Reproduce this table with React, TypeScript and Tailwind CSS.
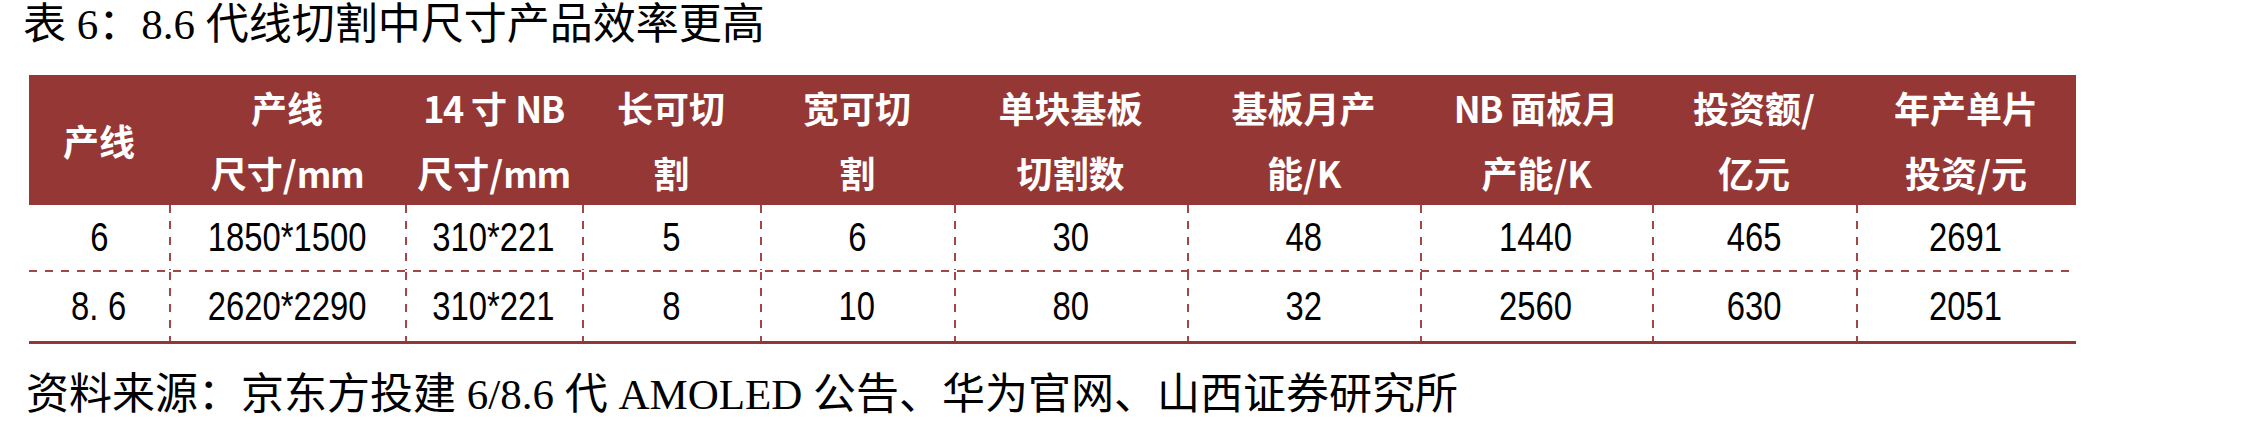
const headers: string[][] = [
  ['产线'],
  ['产线', '尺寸/mm'],
  ['14 寸 NB', '尺寸/mm'],
  ['长可切', '割'],
  ['宽可切', '割'],
  ['单块基板', '切割数'],
  ['基板月产', '能/K'],
  ['NB 面板月', '产能/K'],
  ['投资额/', '亿元'],
  ['年产单片', '投资/元'],
];

const rows: string[][] = [
  ['6', '1850*1500', '310*221', '5', '6', '30', '48', '1440', '465', '2691'],
  ['8.6', '2620*2290', '310*221', '8', '10', '80', '32', '2560', '630', '2051'],
];

const grid =
  'grid grid-cols-[140px_236px_177px_178px_194px_233px_233px_232px_204px_220px]';

const vDash =
  'bg-[repeating-linear-gradient(to_bottom,#a34644_0_8px,transparent_8px_16px)] bg-no-repeat bg-[length:2px_100%] bg-left';

function Cell({ value, first }: { value: string; first: boolean }) {
  // "8.6" is set in a monospaced face in the source, so the dot sits wide
  const content =
    value === '8.6' ? (
      <>
        8<span className="mr-[12px]">.</span>6
      </>
    ) : (
      value
    );
  return (
    <div className={`flex items-center justify-center ${first ? '' : vDash}`}>
      <span className="inline-block scale-x-[0.8] whitespace-nowrap">{content}</span>
    </div>
  );
}

function HeaderLine({ text }: { text: string }) {
  // latin runs in the header are a narrow face; squeeze them a little
  const parts = text.split(/([A-Za-z0-9]+)/).filter(Boolean);
  return (
    <span className="whitespace-nowrap">
      {parts.map((p, i) =>
        /^[A-Za-z0-9]+$/.test(p) ? (
          <span key={i} className="tracking-[-1.5px]">
            {p}
          </span>
        ) : (
          <span key={i}>{p}</span>
        ),
      )}
    </span>
  );
}

export default function App() {
  return (
    <div className="relative h-[429px] w-[2255px] overflow-hidden bg-white text-black">
      <div className="flex h-[75px] items-start pl-[23px] pt-[3px]">
        <h1 className="font-['Liberation_Serif','Noto_Sans_CJK_SC',serif] text-[43px] font-normal leading-[43px] whitespace-nowrap">
          表 6：8.6 代线切割中尺寸产品效率更高
        </h1>
      </div>

      <div className="ml-[29px] w-[2047px]">
        <div
          className={`${grid} h-[130px] bg-[#953735] font-['Noto_Sans_CJK_SC',sans-serif] text-[36px] font-bold leading-[65px] text-white`}
        >
          {headers.map((lines, i) => (
            <div key={i} className="flex flex-col items-center justify-center">
              {lines.map((line) => (
                <HeaderLine key={line} text={line} />
              ))}
            </div>
          ))}
        </div>

        <div className="font-['Liberation_Sans','Noto_Sans_CJK_SC',sans-serif] text-[41px] leading-none">
          <div className={`${grid} h-[65px]`}>
            {rows[0].map((v, i) => (
              <Cell key={i} value={v} first={i === 0} />
            ))}
          </div>
          <div className="h-[2px] w-[2040px] bg-[repeating-linear-gradient(to_right,#a34644_0_8px,transparent_8px_16px)]" />
          <div className={`${grid} h-[69px]`}>
            {rows[1].map((v, i) => (
              <Cell key={i} value={v} first={i === 0} />
            ))}
          </div>
        </div>
        <div className="h-[3px] bg-[#953735]" />
      </div>

      <p className="mt-[29px] pl-[26px] font-['Liberation_Serif','Noto_Sans_CJK_SC',serif] text-[43px] leading-[43px] whitespace-nowrap">
        资料来源：京东方投建 6/8.6 代 AMOLED 公告、华为官网、山西证券研究所
      </p>
    </div>
  );
}
